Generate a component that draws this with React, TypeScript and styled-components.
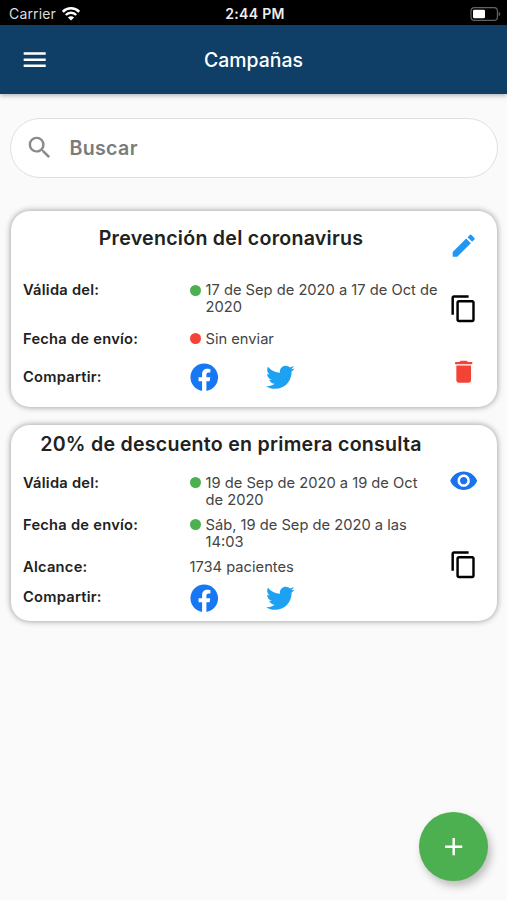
import React from 'react';
import styled, { createGlobalStyle } from 'styled-components';
import { MdAdd, MdContentCopy, MdDelete, MdEdit, MdMenu, MdRemoveRedEye, MdSearch } from 'react-icons/md';
import { FaFacebook, FaTwitter } from 'react-icons/fa';

const GlobalStyle = createGlobalStyle`
  * { box-sizing: border-box; }
  body {
    margin: 0;
    background: #fafafa;
    font-family: Inter, "Liberation Sans", sans-serif;
    color: #212121;
  }
  svg { display: block; flex: none; }
`;

const Screen = styled.div`
  position: relative;
  height: 900px;
  overflow: hidden;
  background: #fafafa;
`;

const StatusBar = styled.div`
  display: grid;
  grid-template-columns: 1fr auto 1fr;
  align-items: center;
  height: 25px;
  padding: 2px 6px 0 9px;
  background: #000;
  color: #fff;
`;

const Carrier = styled.div`
  display: flex;
  align-items: center;
  gap: 6px;
  font-size: 14px;
  letter-spacing: 0.15px;
  color: #dcdcdc;
`;

const Clock = styled.div`
  font-size: 14px;
  font-weight: 600;
  letter-spacing: 0.3px;
  color: #eee;
`;

const BatterySlot = styled.div`
  display: flex;
  justify-content: flex-end;
`;

const AppBar = styled.header`
  display: grid;
  grid-template-columns: 70px 1fr 70px;
  align-items: center;
  height: 69px;
  background: #0f3f66;
  color: #fff;
  box-shadow: 0 1px 5px rgba(0, 0, 0, 0.35);
`;

const MenuButton = styled.button`
  display: flex;
  justify-content: center;
  padding: 0;
  border: 0;
  background: none;
  color: inherit;
`;

const PageTitle = styled.h1`
  margin: 0;
  text-align: center;
  font-size: 19.4px;
  font-weight: 500;
  letter-spacing: 0;
`;

const SearchField = styled.label`
  display: flex;
  align-items: center;
  gap: 15px;
  height: 60px;
  margin: 24px 9px 33px 10px;
  padding-left: 14px;
  border: 1px solid #e0e0e0;
  border-radius: 30px;
  background: #fff;
  color: #8a8a8a;
`;

const SearchText = styled.span`
  font-size: 19.6px;
  font-weight: 600;
  letter-spacing: 0.35px;
  color: #7b7b7b;
`;

const CardList = styled.main`
  display: grid;
  gap: 18px;
  padding: 0 10px 0 10.5px;
`;

const Card = styled.article`
  display: grid;
  grid-template-columns: 416px 1fr;
  height: 196px;
  padding-left: 12.5px;
  border-radius: 19px;
  background: #fff;
  box-shadow: 0 0 6px rgba(0, 0, 0, 0.42);
`;

const Details = styled.div<{ $top: number }>`
  display: flex;
  flex-direction: column;
  padding-top: ${(p) => p.$top}px;
`;

const CardTitle = styled.h2<{ $gap: number }>`
  margin: 0 0 ${(p) => p.$gap}px;
  text-align: center;
  white-space: nowrap;
  font-size: 19.6px;
  line-height: 24px;
  font-weight: 600;
  letter-spacing: 0.26px;
`;

const Row = styled.div<{ $gap?: number }>`
  display: grid;
  grid-template-columns: 166.5px 1fr;
  margin-bottom: ${(p) => p.$gap ?? 0}px;
  font-size: 14.7px;
  line-height: 17.3px;
`;

const ShareRow = styled(Row)`
  align-items: center;
`;

const Label = styled.span`
  font-weight: 600;
  letter-spacing: 0.24px;
`;

const Value = styled.div`
  display: flex;
  color: #444;
  white-space: pre-line;
`;

const Dot = styled.i<{ $color: string }>`
  flex: none;
  width: 11px;
  height: 11px;
  margin: 2.5px 5px 0 0;
  border-radius: 50%;
  background: ${(p) => p.$color};
`;

const ShareLinks = styled.div`
  display: flex;
  align-items: center;
  gap: 48px;
`;

const Actions = styled.div<{ $top: number; $gap: number }>`
  display: flex;
  flex-direction: column;
  align-items: center;
  gap: ${(p) => p.$gap}px;
  padding: ${(p) => p.$top}px 9px 0 0;
`;

const AddButton = styled.button`
  position: absolute;
  right: 19.5px;
  bottom: 19.5px;
  display: flex;
  align-items: center;
  justify-content: center;
  width: 68.6px;
  height: 68.6px;
  padding: 0;
  border: 0;
  border-radius: 50%;
  background: #4caf50;
  color: #fff;
  box-shadow: 3px 5px 9px rgba(0, 0, 0, 0.25);
`;

const ICON = 29.4;
const GREEN = '#4caf50';
const RED = '#f44336';

const WifiIcon = () => (
  <svg width="18" height="14" viewBox="0 0 18 14" fill="none" stroke="#fff" strokeWidth="2.5">
    <path d="M0.8 4.8C5.3 0.2 12.7 0.2 17.2 4.8" />
    <path d="M3.8 8C6.6 5.1 11.4 5.1 14.2 8" />
    <path d="M5.9 10.5C7.7 8.9 10.3 8.9 12.1 10.5L9 13.5Z" fill="#fff" stroke="none" />
  </svg>
);

const BatteryIcon = () => (
  <svg width="31" height="14" viewBox="0 0 31 14">
    <rect x="1" y="0.7" width="26.4" height="12.6" rx="3.4" fill="none" stroke="#626262" strokeWidth="1.2" />
    <rect x="3" y="2.7" width="12" height="8.6" rx="1.4" fill="#fff" />
    <path d="M28.7 4.8C30.8 5.6 30.8 8.4 28.7 9.2Z" fill="#626262" />
  </svg>
);

const Share = () => (
  <ShareRow>
    <Label>Compartir:</Label>
    <ShareLinks>
      <FaFacebook size={28.5} color="#1877f2" />
      <FaTwitter size={28.5} color="#1da1f2" />
    </ShareLinks>
  </ShareRow>
);

export default function App() {
  return (
    <>
      <GlobalStyle />
      <Screen>
        <StatusBar>
          <Carrier>
            Carrier
            <WifiIcon />
          </Carrier>
          <Clock>2:44 PM</Clock>
          <BatterySlot>
            <BatteryIcon />
          </BatterySlot>
        </StatusBar>
        <AppBar>
          <MenuButton aria-label="Menú">
            <MdMenu size={ICON} />
          </MenuButton>
          <PageTitle>Campañas</PageTitle>
        </AppBar>
        <SearchField>
          <MdSearch size={ICON} />
          <SearchText>Buscar</SearchText>
        </SearchField>
        <CardList>
          <Card>
            <Details $top={15}>
              <CardTitle $gap={32}>Prevención del coronavirus</CardTitle>
              <Row $gap={14}>
                <Label>Válida del:</Label>
                <Value>
                  <Dot $color={GREEN} />
                  {'17 de Sep de 2020 a 17 de Oct de\n2020'}
                </Value>
              </Row>
              <Row $gap={15.4}>
                <Label>Fecha de envío:</Label>
                <Value>
                  <Dot $color={RED} />
                  Sin enviar
                </Value>
              </Row>
              <Share />
            </Details>
            <Actions $top={19.5} $gap={34}>
              <MdEdit size={ICON} color="#2196f3" />
              <MdContentCopy size={ICON} color="#000" />
              <MdDelete size={ICON} color={RED} />
            </Actions>
          </Card>
          <Card>
            <Details $top={7}>
              <CardTitle $gap={18.6}>20% de descuento en primera consulta</CardTitle>
              <Row $gap={7.5}>
                <Label>Válida del:</Label>
                <Value>
                  <Dot $color={GREEN} />
                  {'19 de Sep de 2020 a 19 de Oct\nde 2020'}
                </Value>
              </Row>
              <Row $gap={7.5}>
                <Label>Fecha de envío:</Label>
                <Value>
                  <Dot $color={GREEN} />
                  {'Sáb, 19 de Sep de 2020 a las\n14:03'}
                </Value>
              </Row>
              <Row $gap={7.8}>
                <Label>Alcance:</Label>
                <Value>1734 pacientes</Value>
              </Row>
              <Share />
            </Details>
            <Actions $top={41} $gap={55}>
              <MdRemoveRedEye size={ICON} color="#1a73ee" />
              <MdContentCopy size={ICON} color="#000" />
            </Actions>
          </Card>
        </CardList>
        <AddButton aria-label="Agregar">
          <MdAdd size={ICON} />
        </AddButton>
      </Screen>
    </>
  );
}
